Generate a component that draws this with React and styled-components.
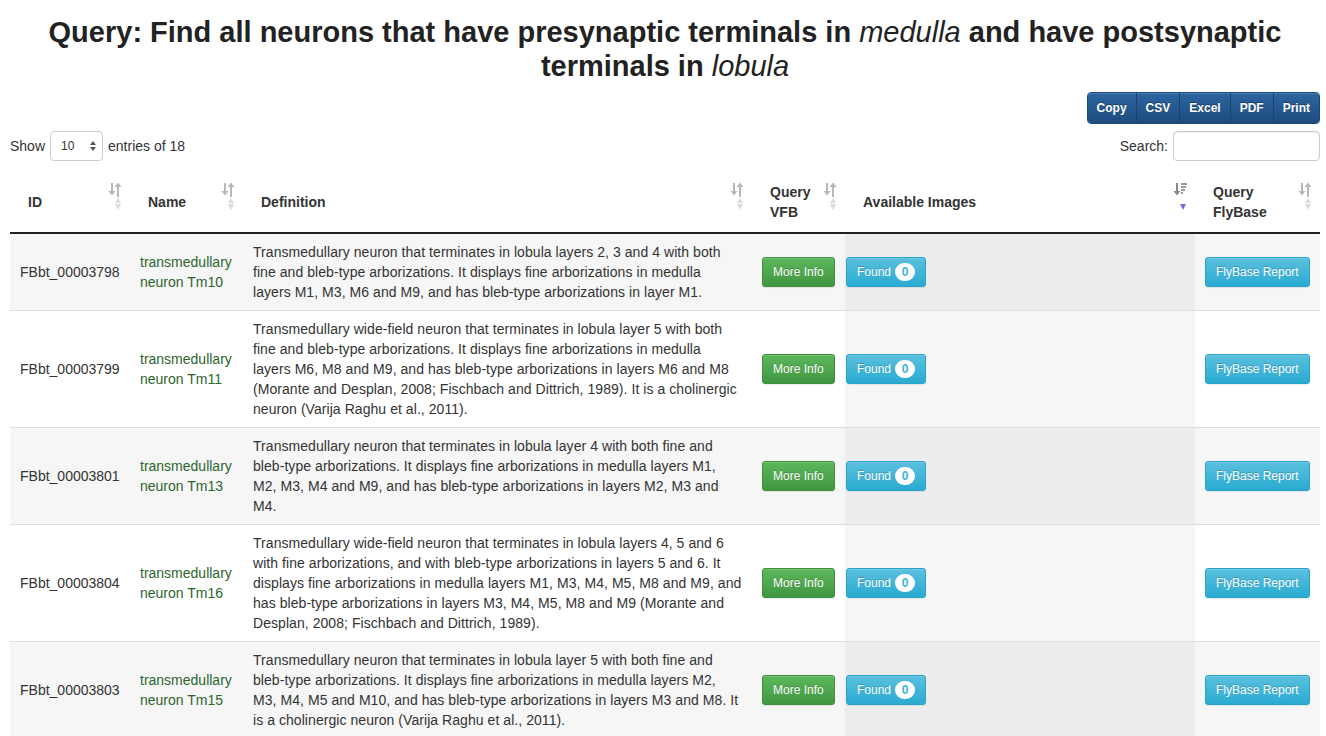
import React from "react";
import styled, { createGlobalStyle } from "styled-components";

const GlobalStyle = createGlobalStyle`
  body {
    margin: 0;
    font-family: "Liberation Sans", Arial, Helvetica, sans-serif;
    font-size: 14px;
    line-height: 20px;
    color: #333;
    background: #fff;
  }
`;

const Page = styled.div`
  padding: 0 6px 0 10px;
`;

const Title = styled.h2`
  margin: 15px 0 9px;
  font-size: 29px;
  line-height: 34px;
  font-weight: bold;
  text-align: center;
  color: #222;
  em {
    font-weight: normal;
    font-style: italic;
  }
`;

const ButtonBar = styled.div`
  display: flex;
  justify-content: flex-end;
`;

const ExportGroup = styled.div`
  display: flex;
  border-radius: 4px;
  overflow: hidden;
  border: 1px solid #1b4675;
`;

const ExportButton = styled.button`
  height: 30px;
  padding: 0 9px;
  font-family: inherit;
  font-size: 12px;
  font-weight: bold;
  color: #fff;
  text-shadow: 0 -1px 0 rgba(0, 0, 0, 0.35);
  background: linear-gradient(to bottom, #2c65a0 0%, #1e4c7e 100%);
  border: none;
  border-left: 1px solid #1a4372;
  box-shadow: inset 0 1px 0 rgba(255, 255, 255, 0.15);
  &:first-child {
    border-left: none;
  }
`;

const Controls = styled.div`
  display: flex;
  justify-content: space-between;
  align-items: center;
  margin: 7px 0 11px;
`;

const Inline = styled.label`
  display: flex;
  align-items: center;
  gap: 5px;
`;

const SelectBox = styled.div`
  display: flex;
  align-items: center;
  justify-content: space-between;
  width: 53px;
  height: 30px;
  box-sizing: border-box;
  padding: 0 6px 0 10px;
  border: 1px solid #ccc;
  border-radius: 4px;
  font-size: 12px;
  background: #fff;
`;

const SearchInput = styled.input`
  width: 147px;
  height: 30px;
  box-sizing: border-box;
  border: 1px solid #ccc;
  border-radius: 4px;
  box-shadow: inset 0 1px 1px rgba(0, 0, 0, 0.075);
  padding: 0 8px;
  font-size: 12px;
`;

const Table = styled.table`
  width: 100%;
  table-layout: fixed;
  border-collapse: collapse;
`;

const Th = styled.th`
  position: relative;
  padding: 10px 30px 10px 18px;
  text-align: left;
  vertical-align: middle;
  font-weight: bold;
  border-bottom: 2px solid #222;
`;

const SortIcon = styled.svg`
  position: absolute;
  top: 10px;
  right: 6px;
`;

const Row = styled.tr`
  background: ${(p) => (p.$odd ? "#f6f6f6" : "#fff")};
`;

const Td = styled.td`
  padding: 8px ${(p) => (p.$tight ? "0 8px 1px" : "10px")};
  vertical-align: middle;
  border-top: 1px solid #ddd;
  letter-spacing: ${(p) => (p.$prose ? "0.057px" : "normal")};
  background: ${(p) => (p.$sorted ? "rgba(0,0,0,0.037)" : "transparent")};
`;

const NameLink = styled.a`
  color: #2d652d;
  text-decoration: none;
`;

const Btn = styled.button`
  display: inline-flex;
  align-items: center;
  gap: 4px;
  height: 30px;
  box-sizing: border-box;
  padding: 0 10px;
  font-family: inherit;
  font-size: 12px;
  color: #fff;
  border-radius: 3px;
  text-shadow: 0 -1px 0 rgba(0, 0, 0, 0.2);
  box-shadow: inset 0 1px 0 rgba(255, 255, 255, 0.15), 0 1px 1px rgba(0, 0, 0, 0.075);
  border: 1px solid ${(p) => (p.$variant === "success" ? "#3e8f3e" : "#28a4c9")};
  background: ${(p) =>
    p.$variant === "success"
      ? "linear-gradient(to bottom, #5cb85c 0%, #419641 100%)"
      : "linear-gradient(to bottom, #5bc0de 0%, #2aabd2 100%)"};
`;

const Badge = styled.span`
  display: inline-flex;
  align-items: center;
  justify-content: center;
  min-width: 20px;
  height: 18px;
  border-radius: 9px;
  background: #fff;
  color: #3fb3d8;
  font-weight: bold;
  font-size: 12px;
  text-shadow: none;
`;

const SortBoth = () => (
  <SortIcon width="16" height="30" viewBox="0 0 16 30">
    <rect x="3" y="1" width="2" height="9" fill="#b8b8b8" />
    <polygon points="0.5,9 7.5,9 4,13.5" fill="#b8b8b8" />
    <rect x="9" y="4" width="2" height="11" fill="#b8b8b8" />
    <polygon points="6.5,5 13.5,5 10,0.5" fill="#b8b8b8" />
    <polygon points="7,21 13,21 10,16" fill="#dcdcdc" />
    <polygon points="7,22 13,22 10,28" fill="#dcdcdc" />
  </SortIcon>
);

const SortDesc = () => (
  <SortIcon width="16" height="30" viewBox="0 0 16 30">
    <rect x="3" y="1" width="2" height="9" fill="#8a8a8a" />
    <polygon points="0.5,9 7.5,9 4,13.5" fill="#8a8a8a" />
    <rect x="8" y="1" width="6" height="2" fill="#9a9a9a" />
    <rect x="8" y="4" width="5" height="2" fill="#9a9a9a" />
    <rect x="8" y="7" width="4" height="2" fill="#9a9a9a" />
    <rect x="8" y="10" width="2" height="2" fill="#9a9a9a" />
    <polygon points="7,22 13,22 10,28" fill="#6f6fdc" />
  </SortIcon>
);

const SelectArrows = () => (
  <svg width="6" height="10" viewBox="0 0 6 10">
    <polygon points="0,4 6,4 3,0" fill="#555" />
    <polygon points="0,6 6,6 3,10" fill="#555" />
  </svg>
);

const rows = [
  {
    id: "FBbt_00003798",
    name: "transmedullary neuron Tm10",
    def: "Transmedullary neuron that terminates in lobula layers 2, 3 and 4 with both fine and bleb-type arborizations. It displays fine arborizations in medulla layers M1, M3, M6 and M9, and has bleb-type arborizations in layer M1.",
  },
  {
    id: "FBbt_00003799",
    name: "transmedullary neuron Tm11",
    def: "Transmedullary wide-field neuron that terminates in lobula layer 5 with both fine and bleb-type arborizations. It displays fine arborizations in medulla layers M6, M8 and M9, and has bleb-type arborizations in layers M6 and M8 (Morante and Desplan, 2008; Fischbach and Dittrich, 1989). It is a cholinergic neuron (Varija Raghu et al., 2011).",
  },
  {
    id: "FBbt_00003801",
    name: "transmedullary neuron Tm13",
    def: "Transmedullary neuron that terminates in lobula layer 4 with both fine and bleb-type arborizations. It displays fine arborizations in medulla layers M1, M2, M3, M4 and M9, and has bleb-type arborizations in layers M2, M3 and M4.",
  },
  {
    id: "FBbt_00003804",
    name: "transmedullary neuron Tm16",
    def: "Transmedullary wide-field neuron that terminates in lobula layers 4, 5 and 6 with fine arborizations, and with bleb-type arborizations in layers 5 and 6. It displays fine arborizations in medulla layers M1, M3, M4, M5, M8 and M9, and has bleb-type arborizations in layers M3, M4, M5, M8 and M9 (Morante and Desplan, 2008; Fischbach and Dittrich, 1989).",
  },
  {
    id: "FBbt_00003803",
    name: "transmedullary neuron Tm15",
    def: "Transmedullary neuron that terminates in lobula layer 5 with both fine and bleb-type arborizations. It displays fine arborizations in medulla layers M2, M3, M4, M5 and M10, and has bleb-type arborizations in layers M3 and M8. It is a cholinergic neuron (Varija Raghu et al., 2011).",
  },
];

const columns = [
  { label: "ID", width: 120 },
  { label: "Name", width: 113 },
  { label: "Definition", width: 509 },
  { label: "Query VFB", width: 93 },
  { label: "Available Images", width: 350, sorted: true },
  { label: "Query FlyBase", width: 125 },
];

export default function App() {
  return (
    <Page>
      <GlobalStyle />
      <Title>
        Query: Find all neurons that have presynaptic terminals in <em>medulla</em> and have
        postsynaptic terminals in <em>lobula</em>
      </Title>

      <ButtonBar>
        <ExportGroup>
          {["Copy", "CSV", "Excel", "PDF", "Print"].map((b) => (
            <ExportButton key={b}>{b}</ExportButton>
          ))}
        </ExportGroup>
      </ButtonBar>

      <Controls>
        <Inline>
          Show
          <SelectBox>
            10
            <SelectArrows />
          </SelectBox>
          entries of 18
        </Inline>
        <Inline>
          Search:
          <SearchInput type="text" />
        </Inline>
      </Controls>

      <Table>
        <colgroup>
          {columns.map((c) => (
            <col key={c.label} style={{ width: c.width }} />
          ))}
        </colgroup>
        <thead>
          <tr>
            {columns.map((c) => (
              <Th key={c.label}>
                {c.label}
                {c.sorted ? <SortDesc /> : <SortBoth />}
              </Th>
            ))}
          </tr>
        </thead>
        <tbody>
          {rows.map((r, i) => (
            <Row key={r.id} $odd={i % 2 === 0}>
              <Td>{r.id}</Td>
              <Td>
                <NameLink href="#">{r.name}</NameLink>
              </Td>
              <Td $prose>{r.def}</Td>
              <Td>
                <Btn $variant="success">More Info</Btn>
              </Td>
              <Td $sorted $tight>
                <Btn $variant="info">
                  Found <Badge>0</Badge>
                </Btn>
              </Td>
              <Td>
                <Btn $variant="info">FlyBase Report</Btn>
              </Td>
            </Row>
          ))}
        </tbody>
      </Table>
    </Page>
  );
}
